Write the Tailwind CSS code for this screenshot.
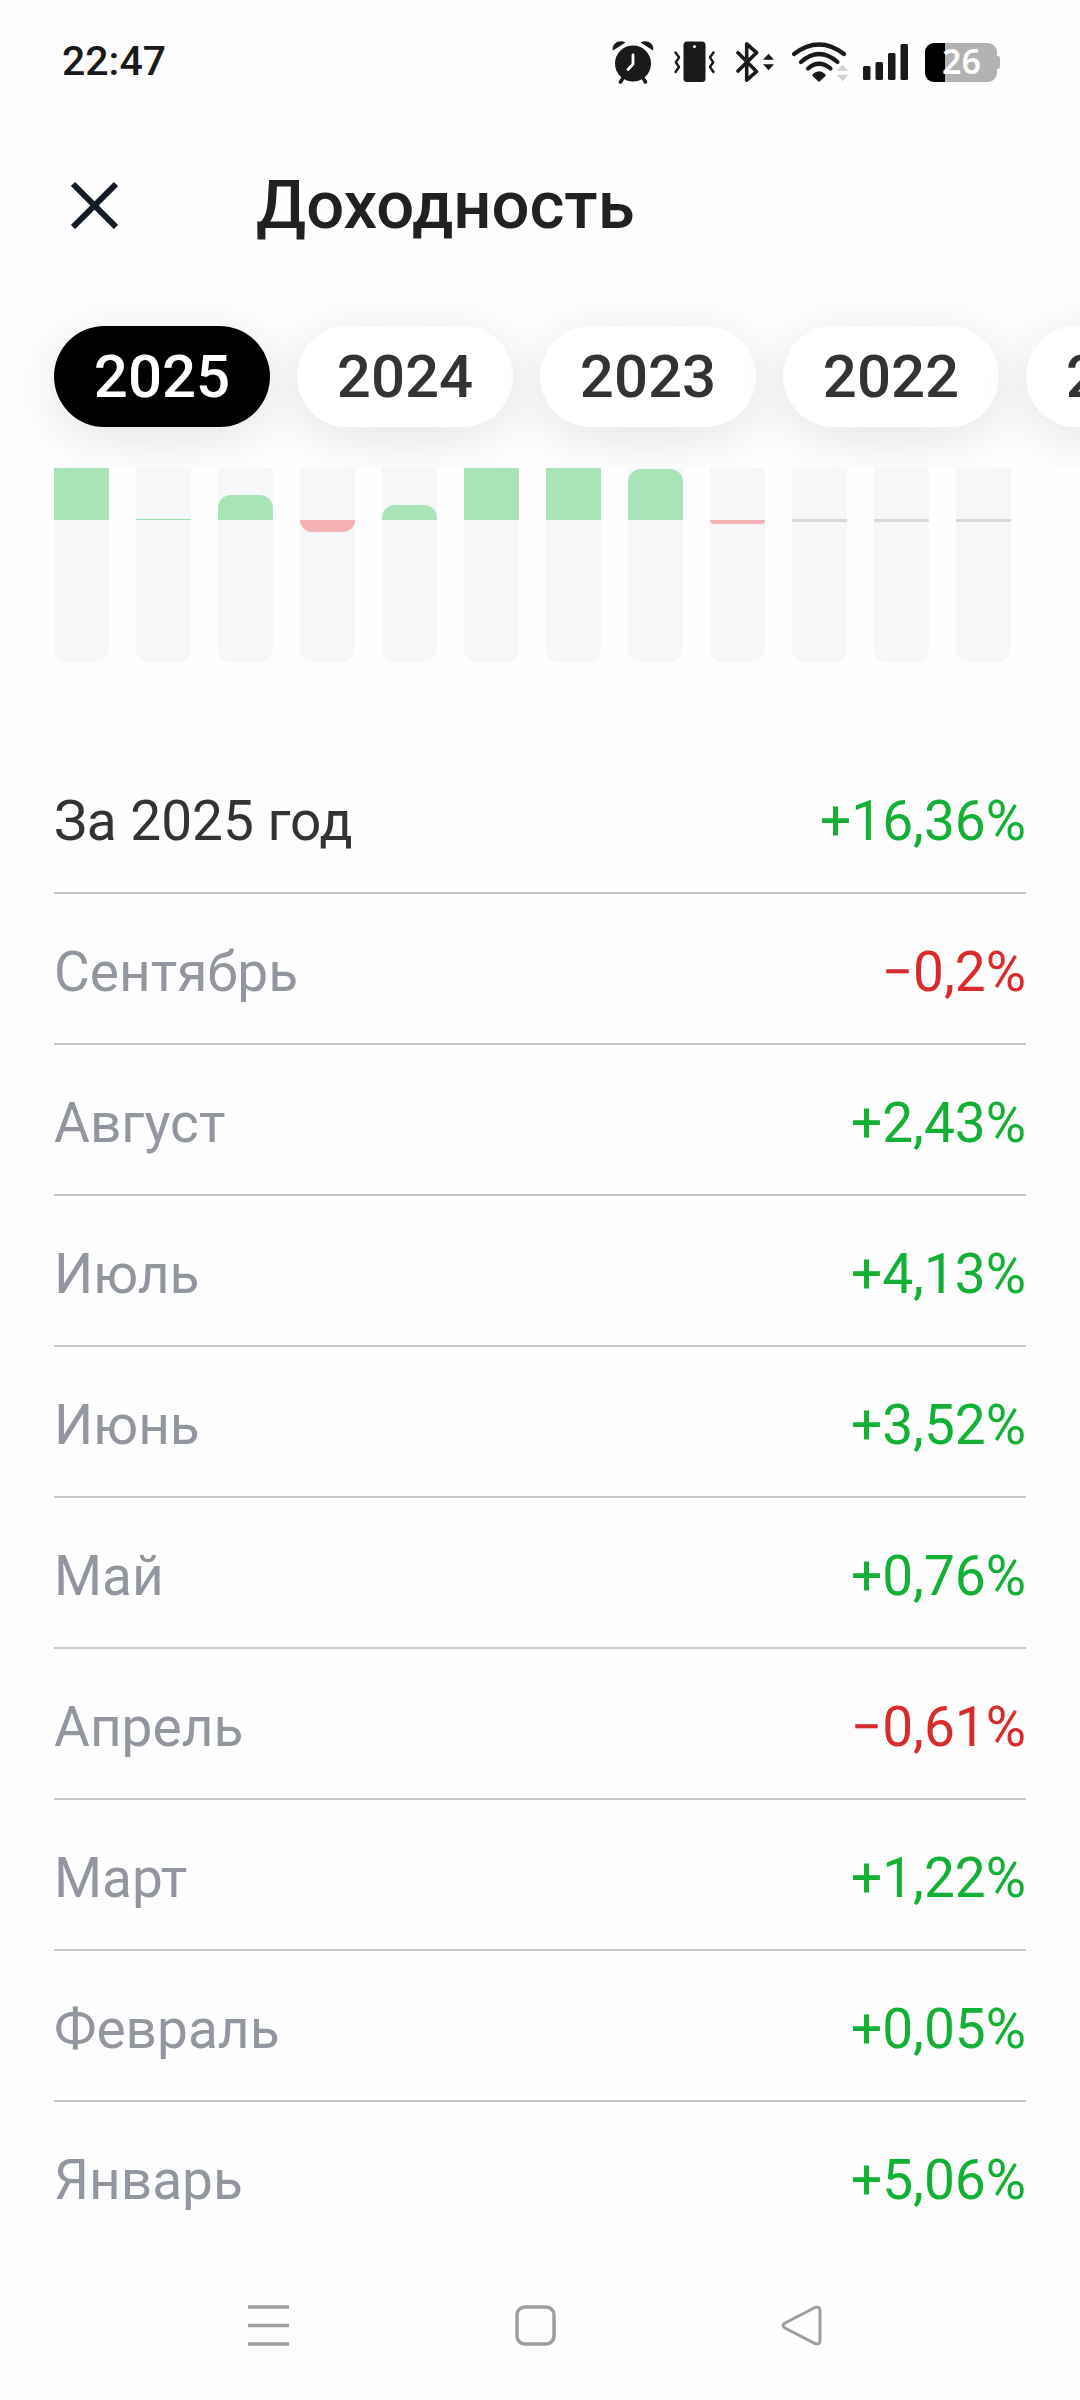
<!DOCTYPE html>
<html lang="ru">
  <head>
    <meta charset="UTF-8" />
    <meta name="viewport" content="width=device-width, initial-scale=1.0" />
    <title>Доходность</title>
    <script src="https://cdn.jsdelivr.net/npm/@tailwindcss/browser@4"></script>
  </head>
  <body class="bg-[#fefefe] font-[Roboto,sans-serif] text-[#333333]">
    <div class="flex min-h-screen flex-col">
      <!-- Status bar -->
      <div class="flex h-[124px] items-center justify-between pl-[62px] pr-20 text-[#1a1a1a]">
        <span class="text-[41px] font-medium">22:47</span>
        <div class="flex items-center gap-4">
          <svg class="h-11 w-[46px]" viewBox="0 0 46 44" fill="currentColor">
            <path d="M1 10.5C-1 4 7-1.5 13.5 2.5z" />
            <path d="M41 10.5C43 4 35-1.5 28.5 2.5z" />
            <circle cx="21" cy="23.5" r="18" />
            <path d="M11 38l-2.5 4M31 38l2.5 4" stroke="currentColor" stroke-width="3.5" stroke-linecap="round" />
            <path d="M21 15v9l-5 5.5" fill="none" stroke="#fff" stroke-width="2.8" stroke-linecap="round" stroke-linejoin="round" />
          </svg>
          <svg class="h-11 w-[46px]" viewBox="0 0 46 44" fill="currentColor">
            <rect x="9.5" y="1.5" width="22" height="40.5" rx="3.5" />
            <circle cx="20.5" cy="6.5" r="1.6" fill="#fff" />
            <path d="M1.5 12.5L5 17.3 1.8 22.3 5 27 1.5 32M39.5 12.5L36 17.3l3.2 5L36 27l3.5 5" fill="none" stroke="currentColor" stroke-width="2.4" stroke-linecap="round" stroke-linejoin="round" />
          </svg>
          <svg class="h-11 w-[39px]" viewBox="0 0 39 44" fill="currentColor">
            <path d="M2 12.7l18.5 18.8-9.8 8.7V3.8l9.8 8.9L2 31" fill="none" stroke="currentColor" stroke-width="3.6" stroke-linecap="round" stroke-linejoin="round" />
            <path d="M27 19.7l5.6-6 5.4 6zM27 24.3l5.6 6 5.4-6z" />
          </svg>
          <svg class="h-11 w-14 overflow-visible" viewBox="0 0 56 44" fill="currentColor">
            <path d="M3 14Q28-5 53 14M10 22Q28 6 46.5 22M17 28.5Q28 19 39.5 28.5" fill="none" stroke="currentColor" stroke-width="4.2" stroke-linecap="round" />
            <path d="M21.5 34.5Q28 28 34.5 34.5Q35 35.5 34 36.5L28 42L22 36.5Q21 35.5 21.5 34.5z" />
            <path d="M46 30.7l5.6-6 5.6 6zM46 34.7l5.6 6.5 5.6-6.5z" fill="#d0d0d0" />
          </svg>
          <svg class="h-11 w-[46px]" viewBox="0 0 46 44" fill="currentColor">
            <rect x="0" y="26" width="7.5" height="14" rx="1.5" />
            <rect x="12.5" y="22" width="7.5" height="18" rx="1.5" />
            <rect x="25" y="13" width="7.5" height="27" rx="1.5" />
            <rect x="37.5" y="4" width="7.5" height="36" rx="1.5" />
          </svg>
          <svg class="h-11 w-[75px]" viewBox="0 0 75 44">
            <path d="M9 3h54a9 9 0 0 1 9 9v4h1q2 0 2 3v7q0 3-2 3h-1v4a9 9 0 0 1-9 9H9a9 9 0 0 1-9-9V12a9 9 0 0 1 9-9z" fill="#b2b2b2" />
            <path d="M20 3H9a9 9 0 0 0-9 9v21a9 9 0 0 0 9 9h11z" fill="#000" />
            <text x="17" y="34" class="font-['Noto_Sans',sans-serif] text-[34px] font-semibold" fill="#fff">26</text>
          </svg>
        </div>
      </div>

      <!-- Header -->
      <header class="flex h-[162px] items-center pl-[70px]">
        <button type="button" aria-label="Закрыть" class="text-[#131b26]">
          <svg class="size-12" viewBox="0 0 48 48" fill="none" stroke="currentColor" stroke-width="6">
            <path d="M3 3l43 43M46 3L3 46" />
          </svg>
        </button>
        <h1 class="ml-[138px] text-[67px] leading-none font-medium text-[#212121]">Доходность</h1>
      </header>

      <!-- Year tabs -->
      <nav id="years" class="flex gap-[27px] overflow-x-auto px-[54px] pt-10 pb-[41px] [scrollbar-width:none]"></nav>

      <!-- Monthly chart, its upper part is scrolled under the tabs -->
      <div id="chart" class="flex h-[194px] items-end gap-[27px] overflow-hidden px-[54px]"></div>

      <!-- Monthly table -->
      <div class="mt-[81px] px-[54px]">
        <table class="w-full border-separate border-spacing-0 text-[55px] leading-none">
          <tbody id="months"></tbody>
        </table>
      </div>

      <!-- System navigation -->
      <div class="mt-auto flex items-center justify-between pt-8 pb-[54px] pl-[248px] pr-[258px] text-[#9e9e9e]">
        <button type="button" aria-label="Меню">
          <svg class="size-[41px]" viewBox="0 0 41 41" fill="none" stroke="currentColor" stroke-width="3.5">
            <path d="M0 2h41M0 20.5h41M0 39h41" />
          </svg>
        </button>
        <button type="button" aria-label="Домой">
          <svg class="size-[41px]" viewBox="0 0 41 41" fill="none" stroke="currentColor" stroke-width="3.5">
            <rect x="2" y="2" width="37" height="37" rx="8" />
          </svg>
        </button>
        <button type="button" aria-label="Назад">
          <svg class="size-[41px]" viewBox="0 0 41 41" fill="none" stroke="currentColor" stroke-width="3">
            <path d="M34 2.5L4 18Q0 20.5 4 23L34 38.5Q39 40 39 35.5V5.5Q39 1 34 2.5z" />
          </svg>
        </button>
      </div>
    </div>

    <script>
      const years = [2025, 2024, 2023, 2022, 2021];
      const total = "+16,36%";
      // null means that the month has no result yet
      const months = [
        { name: "Январь", value: 5.06 },
        { name: "Февраль", value: 0.05 },
        { name: "Март", value: 1.22 },
        { name: "Апрель", value: -0.61 },
        { name: "Май", value: 0.76 },
        { name: "Июнь", value: 3.52 },
        { name: "Июль", value: 4.13 },
        { name: "Август", value: 2.43 },
        { name: "Сентябрь", value: -0.2 },
        { name: "Октябрь", value: null },
        { name: "Ноябрь", value: null },
        { name: "Декабрь", value: null },
      ];
      const pxPerPercent = 21;

      document.getElementById("years").innerHTML = years
        .map(
          (year, i) => `
        <button
          type="button"
          class="h-[101px] w-[216px] shrink-0 rounded-full text-center text-[60px] leading-none font-medium shadow-[0_10px_54px_rgba(0,0,0,0.11)] ${
            i === 0 ? "bg-black text-white" : "bg-white text-[#333333]"
          }"
        >${year}</button>
      `
        )
        .join("");

      document.getElementById("chart").innerHTML = months
        .map(({ value }) => {
          const height = Math.floor(Math.abs(value) * pxPerPercent);
          let up = "";
          let down = "";
          if (value === null) {
            down = `<div class="-mt-px h-[3px] bg-[#d6d8d9]"></div>`;
          } else if (value < 0) {
            down = `<div class="rounded-b-[13px] bg-[#f4b2b4]" style="height: ${height}px"></div>`;
          } else if (height < 4) {
            up = `<div class="w-full bg-[#9adcac]" style="height: ${height}px"></div>`;
          } else {
            up = `<div class="w-full rounded-t-[13px] bg-[#a8e4b8]" style="height: ${height}px"></div>`;
          }
          return `
        <div class="w-[55px] shrink-0">
          <div class="flex h-[142px] items-end rounded-t-[13px] bg-[#f5f7f8]">${up}</div>
          <div class="h-[142px] rounded-b-[13px] bg-[#f5f7f8]">
            <div class="flex flex-col">${down}</div>
          </div>
        </div>
      `;
        })
        .join("");

      const format = (value) =>
        (value > 0 ? "+" : "−") + String(Math.abs(value)).replace(".", ",") + "%";

      const rows = months
        .filter((month) => month.value !== null)
        .reverse()
        .map((month) => ({
          name: month.name,
          text: format(month.value),
          nameColor: "text-[#92979f]",
          textColor: month.value > 0 ? "text-[#12b035]" : "text-[#d92b2b]",
        }));
      rows.unshift({
        name: "За 2025 год",
        text: total,
        nameColor: "text-[#333333]",
        textColor: "text-[#12b035]",
      });

      document.getElementById("months").innerHTML = rows
        .map(
          (row) => `
        <tr class="group h-[151px]">
          <th scope="row" class="border-b-2 border-[#c8c8ca] pt-2 text-left font-normal group-last:border-transparent ${row.nameColor}">${row.name}</th>
          <td class="border-b-2 border-[#c8c8ca] pt-2 text-right group-last:border-transparent ${row.textColor}">${row.text}</td>
        </tr>
      `
        )
        .join("");
    </script>
  </body>
</html>
